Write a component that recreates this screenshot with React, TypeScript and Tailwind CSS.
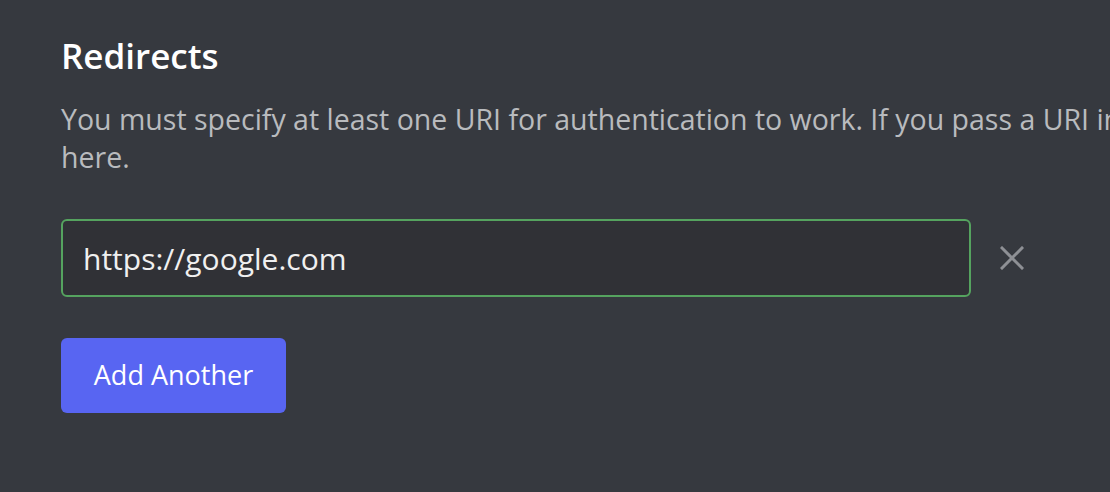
export default function App() {
  return (
    <div className="w-[1110px] h-[492px] overflow-hidden bg-[#36393f] font-['Open_Sans',sans-serif]">
      <div className="pl-[61px] pt-[34px]">
        <h2 className="text-[35px] leading-[44px] font-semibold text-white">Redirects</h2>

        <p className="mt-[22px] text-[28.5px] leading-[38px] text-[#b9bbbe] whitespace-nowrap">
          You must specify at least one URI for authentication to work. If you pass a URI in an OAuth request, it must exactly match one of the URIs you enter
          <br />
          here.
        </p>

        <div className="mt-[43px] flex items-center">
          <div className="w-[910px] h-[78px] rounded-[6px] border-2 border-[#55a35f] bg-[#303136] flex items-center px-[20px]">
            <span className="text-[30px] text-[#f0f0f0]">https://google.com</span>
          </div>
          <button className="ml-[29px] text-[#8e9095]">
            <svg width="24" height="24" viewBox="0 0 24 24" fill="none" stroke="currentColor" strokeWidth="3" strokeLinecap="square">
              <path d="M2 2 L22 22 M22 2 L2 22" />
            </svg>
          </button>
        </div>

        <button className="mt-[41px] w-[225px] h-[75px] rounded-[6px] bg-[#5865f2] text-white text-[27px]">
          Add Another
        </button>
      </div>
    </div>
  );
}
